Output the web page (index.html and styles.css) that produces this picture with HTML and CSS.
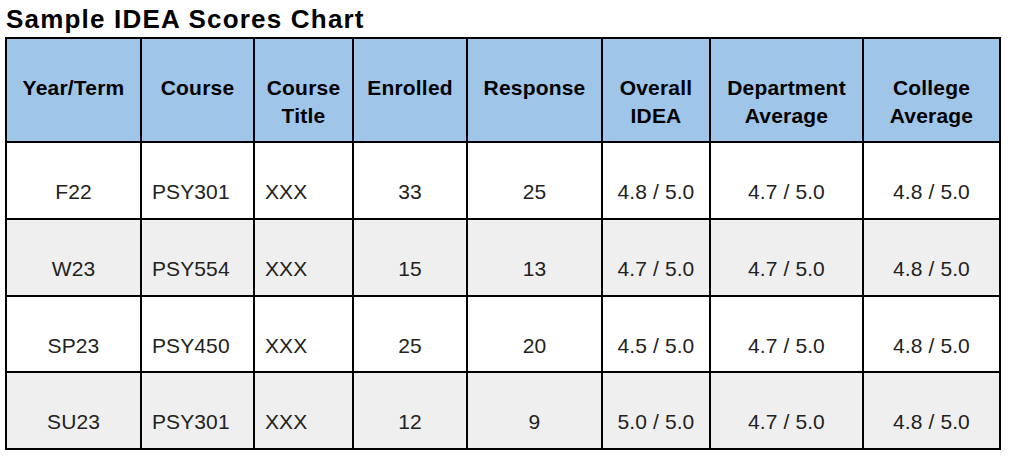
FILE: index.html
```html
<!DOCTYPE html>
<html lang="en">
<head>
<meta charset="utf-8">
<title>Sample IDEA Scores Chart</title>
<link rel="stylesheet" href="styles.css">
</head>
<body>
<h1 class="title">Sample IDEA Scores Chart</h1>
<table class="scores">
  <colgroup>
    <col class="c1"><col class="c2"><col class="c3"><col class="c4">
    <col class="c5"><col class="c6"><col class="c7"><col class="c8">
  </colgroup>
  <thead>
    <tr class="head">
      <th>Year/Term</th>
      <th>Course</th>
      <th>Course<br>Title</th>
      <th>Enrolled</th>
      <th>Response</th>
      <th>Overall<br>IDEA</th>
      <th>Department<br>Average</th>
      <th>College<br>Average</th>
    </tr>
  </thead>
  <tbody>
    <tr class="row">
      <td class="ctr">F22</td><td class="lft">PSY301</td><td class="lft">XXX</td><td class="ctr">33</td><td class="ctr">25</td><td class="ctr">4.8 / 5.0</td><td class="ctr">4.7 / 5.0</td><td class="ctr">4.8 / 5.0</td>
    </tr>
    <tr class="row alt">
      <td class="ctr">W23</td><td class="lft">PSY554</td><td class="lft">XXX</td><td class="ctr">15</td><td class="ctr">13</td><td class="ctr">4.7 / 5.0</td><td class="ctr">4.7 / 5.0</td><td class="ctr">4.8 / 5.0</td>
    </tr>
    <tr class="row short">
      <td class="ctr">SP23</td><td class="lft">PSY450</td><td class="lft">XXX</td><td class="ctr">25</td><td class="ctr">20</td><td class="ctr">4.5 / 5.0</td><td class="ctr">4.7 / 5.0</td><td class="ctr">4.8 / 5.0</td>
    </tr>
    <tr class="row alt">
      <td class="ctr">SU23</td><td class="lft">PSY301</td><td class="lft">XXX</td><td class="ctr">12</td><td class="ctr">9</td><td class="ctr">5.0 / 5.0</td><td class="ctr">4.7 / 5.0</td><td class="ctr">4.8 / 5.0</td>
    </tr>
  </tbody>
</table>
</body>
</html>
```
FILE: styles.css
```css
html, body {
  margin: 0;
  padding: 0;
  background: #ffffff;
}

body {
  font-family: "Liberation Sans", Arial, sans-serif;
  color: #222222;
  padding: 4px 0 0 5px;
}

.title {
  margin: 0 0 3px 1px;
  font-size: 26px;
  line-height: 30px;
  font-weight: bold;
  letter-spacing: 1.2px;
  color: #000000;
}

.scores {
  border-collapse: collapse;
  table-layout: fixed;
  width: 996px;
}

.c1 { width: 135px; }
.c2 { width: 113px; }
.c3 { width: 99px; }
.c4 { width: 114px; }
.c5 { width: 135px; }
.c6 { width: 108px; }
.c7 { width: 153px; }
.c8 { width: 137px; }

.scores th,
.scores td {
  border: 2px solid #000000;
  vertical-align: top;
  line-height: 28px;
  padding: 0 10px;
}

.scores th {
  background: #9fc5e8;
  color: #000000;
  font-size: 21px;
  font-weight: bold;
  text-align: center;
  padding-top: 35px;
  letter-spacing: 0.2px;
}

.head { height: 104px; }

.scores td {
  font-size: 21px;
  padding-top: 35px;
  letter-spacing: 0.1px;
}

.row { height: 77px; }
.row.short { height: 76px; }
.alt td { background: #efefef; }

.ctr { text-align: center; }
.lft { text-align: left; }
```
